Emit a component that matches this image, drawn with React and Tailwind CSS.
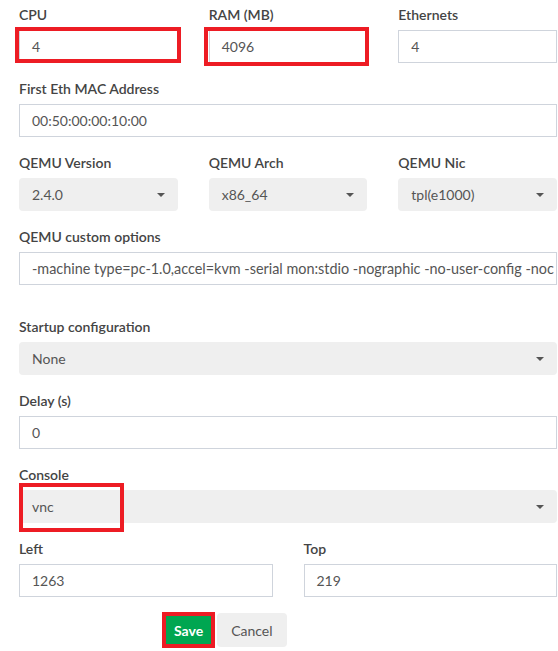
import React from 'react';

function Label({ children }) {
  return <div className="h-5 mb-[5px] text-[14px] leading-5 font-semibold text-[#444]">{children}</div>;
}

function TextInput({ value, className = 'text-[14px]' }) {
  return (
    <div className={'h-[33px] border border-[#cfd4dc] bg-white px-3 flex items-center overflow-hidden whitespace-nowrap text-[#555] ' + className}>
      {value}
    </div>
  );
}

function SelectBox({ value }) {
  return (
    <div className="h-[33px] rounded bg-[#efefef] pl-[13px] pr-[13px] flex items-center justify-between text-[14px] text-[#555]">
      <span>{value}</span>
      <span className="w-0 h-0 border-x-4 border-x-transparent border-t-4 border-t-[#555]" />
    </div>
  );
}

// red annotation frame drawn over a control
function Marked({ children, className }) {
  return (
    <div className="relative">
      {children}
      <div className={'absolute border-4 border-[#ed1c24] pointer-events-none ' + className} />
    </div>
  );
}

function Field({ label, children, className = 'mb-4' }) {
  return (
    <div className={className}>
      <Label>{label}</Label>
      {children}
    </div>
  );
}

export default function App() {
  return (
    <div className="w-[558px] h-[651px] overflow-hidden bg-white pt-[5px] pl-[19px] pr-px" style={{ fontFamily: 'Lato, "Noto Sans", sans-serif' }}>
      <div className="grid grid-cols-3 gap-x-[31px]">
        <Field label="CPU">
          <Marked className="-left-[4px] -right-[3px] -top-[3px] bottom-0">
            <TextInput value="4" />
          </Marked>
        </Field>
        <Field label="RAM (MB)">
          <Marked className="-left-[5px] -right-[2px] -top-[3px] -bottom-[3px]">
            <TextInput value="4096" />
          </Marked>
        </Field>
        <Field label="Ethernets">
          <TextInput value="4" />
        </Field>
      </div>

      <Field label="First Eth MAC Address">
        <TextInput value="00:50:00:00:10:00" />
      </Field>

      <div className="grid grid-cols-3 gap-x-[31px]">
        <Field label="QEMU Version">
          <SelectBox value="2.4.0" />
        </Field>
        <Field label="QEMU Arch">
          <SelectBox value="x86_64" />
        </Field>
        <Field label="QEMU Nic">
          <SelectBox value="tpl(e1000)" />
        </Field>
      </div>

      <Field label="QEMU custom options" className="mb-8">
        <TextInput className="text-[14.4px]" value="-machine type=pc-1.0,accel=kvm -serial mon:stdio -nographic -no-user-config -noc" />
      </Field>

      <Field label="Startup configuration">
        <SelectBox value="None" />
      </Field>

      <Field label="Delay (s)">
        <TextInput value="0" />
      </Field>

      <Field label="Console">
        <Marked className="left-0 w-[105px] -top-[7px] -bottom-[9px]">
          <SelectBox value="vnc" />
        </Marked>
      </Field>

      <div className="grid grid-cols-2 gap-x-[31px]">
        <Field label="Left">
          <TextInput value="1263" />
        </Field>
        <Field label="Top">
          <TextInput value="219" />
        </Field>
      </div>

      <div className="flex gap-[4px] pl-[145px]">
        <Marked className="-inset-[2px] -top-[1px] -bottom-[1px]">
          <button className="h-[34px] px-[10px] rounded bg-[#00a651] text-white text-[14px] font-bold">Save</button>
        </Marked>
        <button className="h-[34px] px-[14px] rounded bg-[#efefef] text-[#555] text-[14px]">Cancel</button>
      </div>
    </div>
  );
}
